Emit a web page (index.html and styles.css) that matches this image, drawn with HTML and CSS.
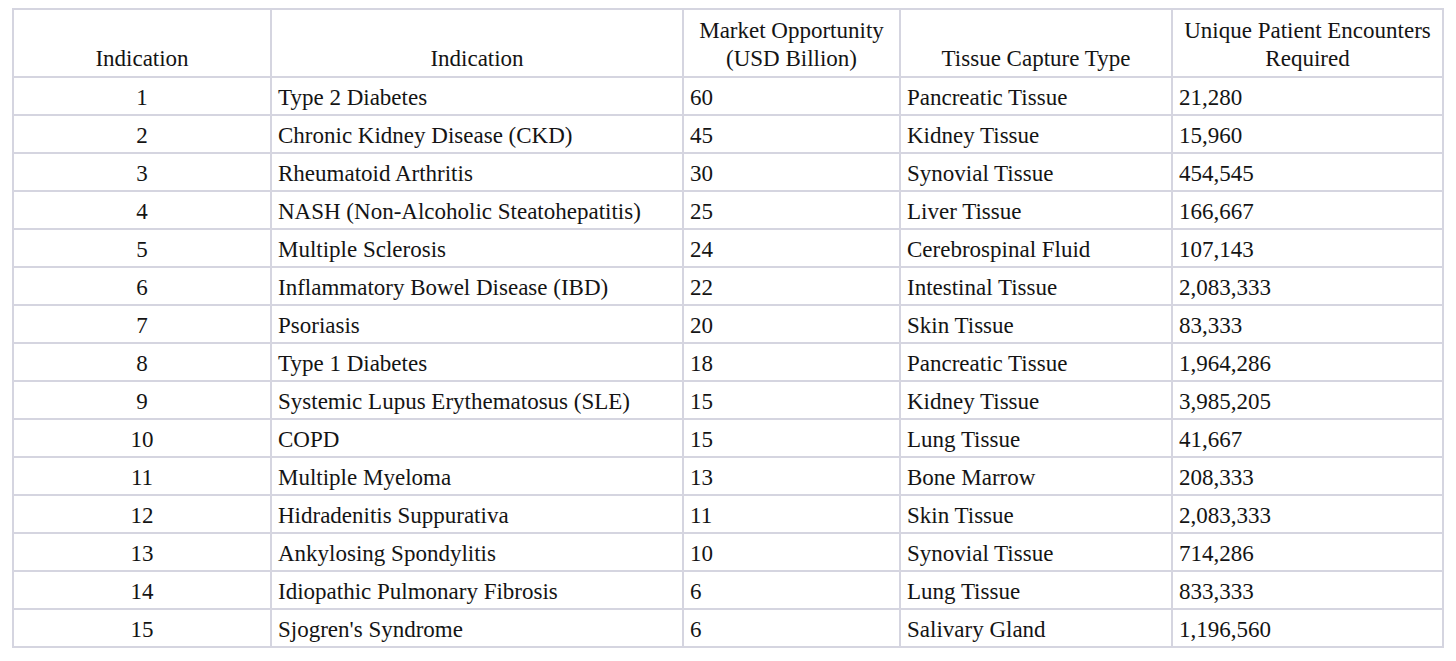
FILE: index.html
```html
<!DOCTYPE html>
<html>
<head>
<meta charset="utf-8">
<link rel="stylesheet" href="styles.css">
</head>
<body>
<table class="data">
  <colgroup>
    <col class="c1"><col class="c2"><col class="c3"><col class="c4"><col class="c5">
  </colgroup>
  <thead>
    <tr>
      <th>Indication</th>
      <th>Indication</th>
      <th>Market Opportunity<br>(USD Billion)</th>
      <th>Tissue Capture Type</th>
      <th>Unique Patient Encounters<br>Required</th>
    </tr>
  </thead>
  <tbody>
    <tr><td class="num">1</td><td>Type 2 Diabetes</td><td>60</td><td>Pancreatic Tissue</td><td>21,280</td></tr>
    <tr><td class="num">2</td><td>Chronic Kidney Disease (CKD)</td><td>45</td><td>Kidney Tissue</td><td>15,960</td></tr>
    <tr><td class="num">3</td><td>Rheumatoid Arthritis</td><td>30</td><td>Synovial Tissue</td><td>454,545</td></tr>
    <tr><td class="num">4</td><td>NASH (Non-Alcoholic Steatohepatitis)</td><td>25</td><td>Liver Tissue</td><td>166,667</td></tr>
    <tr><td class="num">5</td><td>Multiple Sclerosis</td><td>24</td><td>Cerebrospinal Fluid</td><td>107,143</td></tr>
    <tr><td class="num">6</td><td>Inflammatory Bowel Disease (IBD)</td><td>22</td><td>Intestinal Tissue</td><td>2,083,333</td></tr>
    <tr><td class="num">7</td><td>Psoriasis</td><td>20</td><td>Skin Tissue</td><td>83,333</td></tr>
    <tr><td class="num">8</td><td>Type 1 Diabetes</td><td>18</td><td>Pancreatic Tissue</td><td>1,964,286</td></tr>
    <tr><td class="num">9</td><td>Systemic Lupus Erythematosus (SLE)</td><td>15</td><td>Kidney Tissue</td><td>3,985,205</td></tr>
    <tr><td class="num">10</td><td>COPD</td><td>15</td><td>Lung Tissue</td><td>41,667</td></tr>
    <tr><td class="num">11</td><td>Multiple Myeloma</td><td>13</td><td>Bone Marrow</td><td>208,333</td></tr>
    <tr><td class="num">12</td><td>Hidradenitis Suppurativa</td><td>11</td><td>Skin Tissue</td><td>2,083,333</td></tr>
    <tr><td class="num">13</td><td>Ankylosing Spondylitis</td><td>10</td><td>Synovial Tissue</td><td>714,286</td></tr>
    <tr><td class="num">14</td><td>Idiopathic Pulmonary Fibrosis</td><td>6</td><td>Lung Tissue</td><td>833,333</td></tr>
    <tr><td class="num">15</td><td>Sjogren's Syndrome</td><td>6</td><td>Salivary Gland</td><td>1,196,560</td></tr>
  </tbody>
</table>
</body>
</html>
```

FILE: styles.css
```css
html, body {
  background: #ffffff;
}
body {
  margin: 0;
  padding: 8px 0 0 12px;
  font-family: "Liberation Serif", "Times New Roman", serif;
  color: #141414;
}
.data {
  border-collapse: collapse;
  table-layout: fixed;
  width: 1430px;
  font-size: 23px;
  line-height: 28px;
}
.c1 { width: 258px; }
.c2 { width: 412px; }
.c3 { width: 217px; }
.c4 { width: 272px; }
.c5 { width: 271px; }
.data th,
.data td {
  border: 2px solid #d5d5e0;
  white-space: nowrap;
  overflow: hidden;
}
.data th {
  font-weight: normal;
  text-align: center;
  vertical-align: bottom;
  height: 63px;
  padding: 0 4px 3px;
}
.data td {
  text-align: left;
  vertical-align: middle;
  height: 38px;
  padding: 4px 6px 0 6px;
  box-sizing: border-box;
}
.data td.num {
  text-align: center;
}
```
